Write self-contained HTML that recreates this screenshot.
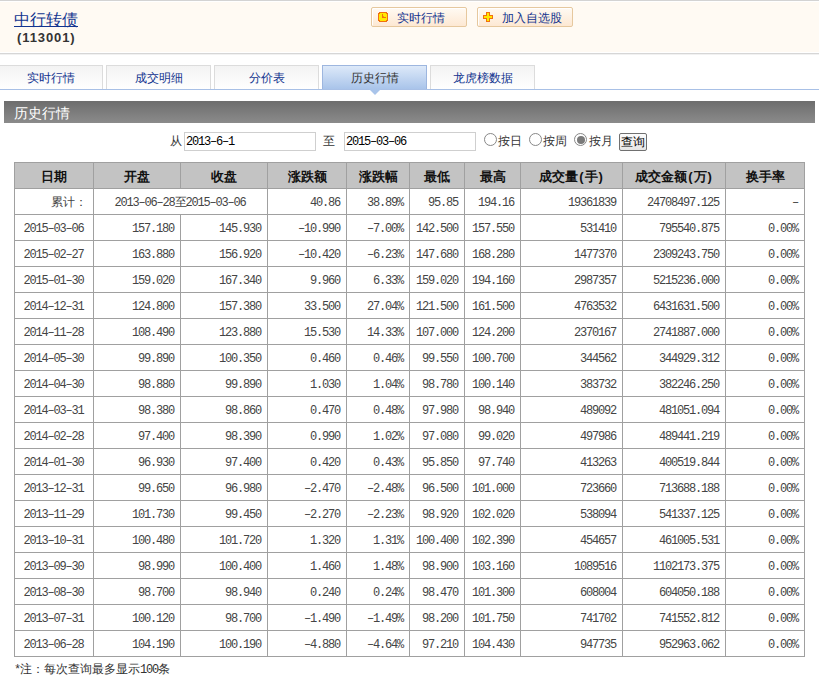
<!DOCTYPE html>
<html><head><meta charset="utf-8">
<style>
*{margin:0;padding:0;box-sizing:border-box}
html,body{width:819px;height:680px;overflow:hidden;background:#fff;font-family:"Liberation Sans",sans-serif;font-size:12px;color:#333}
.abs{position:absolute}
#hdr{position:absolute;left:0;top:0;width:819px;height:54px;background:#fffaf3;border-top:1px solid #d3d3d3;border-bottom:1px solid #d6d6d6;box-shadow:inset 0 1px 0 #fff, inset 0 -1px 0 #fff, 0 1px 0 #f1f1f1}
#title{position:absolute;left:14px;top:10px;font-size:16px;color:#12348f;text-decoration:underline;line-height:20px;white-space:nowrap}
#code{position:absolute;left:17px;top:30px;font-size:13px;font-weight:bold;color:#333;line-height:16px;letter-spacing:0.9px}
.btn{position:absolute;top:7px;height:20px;border:1px solid #e6c89e;border-radius:2px;background:linear-gradient(#fffaf3,#fde8d3);box-shadow:inset 1px 1px 0 #fff;color:#12348f;font-size:12px;line-height:18px;white-space:nowrap}
.btn svg{position:absolute;left:6px;top:4px}
.btn span{position:absolute;top:1px}
.tab{position:absolute;top:65px;height:24px;width:105px;border:1px solid #dcdcdc;border-bottom:none;background:linear-gradient(#f3f3f3,#fff);color:#12348f;text-align:center;line-height:23px;padding-top:1px;font-size:12px}
.tab.on{border-color:#9db6df;background:linear-gradient(#dde9f9,#a9c4ea);color:#333}
#tabline{position:absolute;left:0;top:89px;width:819px;height:1px;background:#a8c0e6}
#arrow{position:absolute;left:369px;top:89px;width:0;height:0;border-left:6px solid transparent;border-right:6px solid transparent;border-top:6px solid #a9c4ea}
#bar{position:absolute;left:4px;top:101px;width:811px;height:22px;background:linear-gradient(#6d6d6d,#8b8b8b);color:#fff;font-size:14px;line-height:24px;padding-left:10px}
.inp{position:absolute;top:132px;height:19px;border:1px solid #cfcfcf;font-family:"Liberation Mono",monospace;font-size:12px;letter-spacing:-1.2px;line-height:17px;padding-left:1px;padding-top:1px;color:#000;background:#fff}
.lbl{position:absolute;top:133px;line-height:16px;font-size:12px;color:#333}
.radio{position:absolute;top:133px;width:13px;height:13px;border:1px solid #888;border-radius:50%;background:#fff}
.radio.on::after{content:"";position:absolute;left:1.5px;top:1.5px;width:8px;height:8px;border-radius:50%;background:#7a7a7a}
#qbtn{position:absolute;left:619px;top:133px;width:28px;height:18px;border:1px solid #707070;border-radius:2px;background:linear-gradient(#fcfcfc,#e6e6e6);color:#000;font-size:12px;line-height:16px;text-align:center}
table{position:absolute;left:14px;top:162px;border-collapse:collapse;table-layout:fixed;width:790px}
td,th{border:1px solid #a0a0a0;height:26px;padding:2px 6px 0 0;font-family:"Liberation Mono",monospace;font-size:12px;letter-spacing:-1.2px;color:#444;text-align:right;white-space:nowrap;overflow:hidden}
th{background:#c3c3c3;font-family:"Liberation Sans",sans-serif;font-size:13px;font-weight:bold;text-align:center;letter-spacing:0;padding:2px 0 0 0;color:#111}
td.c{text-align:center;padding:2px 1px 0 0}
td.f{letter-spacing:0;font-family:"Liberation Sans",sans-serif;padding-right:6px}
th i{font-style:normal;padding:0 1px}
.m{font-weight:normal;font-family:"Liberation Mono",monospace;letter-spacing:-1.2px}
#note{position:absolute;left:14px;top:661px;font-size:12px;color:#333;line-height:16px}
</style></head><body>
<div id="hdr"></div>
<div id="title">中行转债</div>
<div id="code">(113001)</div>
<div class="btn" style="left:371px;width:96px">
<svg width="10" height="10" viewBox="0 0 10 10" shape-rendering="crispEdges"><rect x="1" y="0" width="8" height="10" fill="#f07010"/><rect x="0" y="1" width="10" height="8" fill="#f07010"/><rect x="2" y="1" width="6" height="8" fill="#ffe800"/><rect x="1" y="2" width="8" height="6" fill="#ffe800"/><rect x="4" y="2" width="1" height="4" fill="#f07010"/><rect x="4" y="5" width="4" height="1" fill="#f07010"/><rect x="5" y="4" width="1" height="1" fill="#f5a000"/></svg>
<span style="left:25px">实时行情</span></div>
<div class="btn" style="left:477px;width:96px">
<svg style="left:5px" width="10" height="10" viewBox="0 0 10 10" shape-rendering="crispEdges"><rect x="3" y="0" width="4" height="10" fill="#f07010"/><rect x="0" y="3" width="10" height="4" fill="#f07010"/><rect x="4" y="1" width="2" height="8" fill="#ffe800"/><rect x="1" y="4" width="8" height="2" fill="#ffe800"/></svg>
<span style="left:24px">加入自选股</span></div>

<div class="tab" style="left:-2px">实时行情</div>
<div class="tab" style="left:106px">成交明细</div>
<div class="tab" style="left:214px">分价表</div>
<div class="tab on" style="left:322px">历史行情</div>
<div class="tab" style="left:430px">龙虎榜数据</div>
<div id="tabline"></div>
<div id="arrow"></div>

<div id="bar">历史行情</div>

<div class="lbl" style="left:170px">从</div>
<div class="inp" style="left:184px;width:132px">2013–6–1</div>
<div class="lbl" style="left:323px">至</div>
<div class="inp" style="left:344px;width:132px">2015–03–06</div>
<div class="radio" style="left:484px"></div><div class="lbl" style="left:498px">按日</div>
<div class="radio" style="left:529px"></div><div class="lbl" style="left:543px">按周</div>
<div class="radio on" style="left:574px"></div><div class="lbl" style="left:589px">按月</div>
<div id="qbtn">查询</div>

<table>
<colgroup><col style="width:79px"><col style="width:87px"><col style="width:87px"><col style="width:79px"><col style="width:63px"><col style="width:55px"><col style="width:56px"><col style="width:102px"><col style="width:103px"><col style="width:79px"></colgroup>
<tr><th>日期</th><th>开盘</th><th>收盘</th><th>涨跌额</th><th>涨跌幅</th><th>最低</th><th>最高</th><th>成交量<i>(</i>手<i>)</i></th><th>成交金额<i>(</i>万<i>)</i></th><th>换手率</th></tr>
<tr><td class="f">累计：</td><td class="c" colspan="2">2013–06–28至2015–03–06</td><td>40.86</td><td>38.89%</td><td>95.85</td><td>194.16</td><td>19361839</td><td>24708497.125</td><td>–</td></tr>
<tr><td class="c">2015–03–06</td><td>157.180</td><td>145.930</td><td>–10.990</td><td>–7.00%</td><td>142.500</td><td>157.550</td><td>531410</td><td>795540.875</td><td>0.00%</td></tr>
<tr><td class="c">2015–02–27</td><td>163.880</td><td>156.920</td><td>–10.420</td><td>–6.23%</td><td>147.680</td><td>168.280</td><td>1477370</td><td>2309243.750</td><td>0.00%</td></tr>
<tr><td class="c">2015–01–30</td><td>159.020</td><td>167.340</td><td>9.960</td><td>6.33%</td><td>159.020</td><td>194.160</td><td>2987357</td><td>5215236.000</td><td>0.00%</td></tr>
<tr><td class="c">2014–12–31</td><td>124.800</td><td>157.380</td><td>33.500</td><td>27.04%</td><td>121.500</td><td>161.500</td><td>4763532</td><td>6431631.500</td><td>0.00%</td></tr>
<tr><td class="c">2014–11–28</td><td>108.490</td><td>123.880</td><td>15.530</td><td>14.33%</td><td>107.000</td><td>124.200</td><td>2370167</td><td>2741887.000</td><td>0.00%</td></tr>
<tr><td class="c">2014–05–30</td><td>99.890</td><td>100.350</td><td>0.460</td><td>0.46%</td><td>99.550</td><td>100.700</td><td>344562</td><td>344929.312</td><td>0.00%</td></tr>
<tr><td class="c">2014–04–30</td><td>98.880</td><td>99.890</td><td>1.030</td><td>1.04%</td><td>98.780</td><td>100.140</td><td>383732</td><td>382246.250</td><td>0.00%</td></tr>
<tr><td class="c">2014–03–31</td><td>98.380</td><td>98.860</td><td>0.470</td><td>0.48%</td><td>97.980</td><td>98.940</td><td>489092</td><td>481051.094</td><td>0.00%</td></tr>
<tr><td class="c">2014–02–28</td><td>97.400</td><td>98.390</td><td>0.990</td><td>1.02%</td><td>97.080</td><td>99.020</td><td>497986</td><td>489441.219</td><td>0.00%</td></tr>
<tr><td class="c">2014–01–30</td><td>96.930</td><td>97.400</td><td>0.420</td><td>0.43%</td><td>95.850</td><td>97.740</td><td>413263</td><td>400519.844</td><td>0.00%</td></tr>
<tr><td class="c">2013–12–31</td><td>99.650</td><td>96.980</td><td>–2.470</td><td>–2.48%</td><td>96.500</td><td>101.000</td><td>723660</td><td>713688.188</td><td>0.00%</td></tr>
<tr><td class="c">2013–11–29</td><td>101.730</td><td>99.450</td><td>–2.270</td><td>–2.23%</td><td>98.920</td><td>102.020</td><td>538094</td><td>541337.125</td><td>0.00%</td></tr>
<tr><td class="c">2013–10–31</td><td>100.480</td><td>101.720</td><td>1.320</td><td>1.31%</td><td>100.400</td><td>102.390</td><td>454657</td><td>461005.531</td><td>0.00%</td></tr>
<tr><td class="c">2013–09–30</td><td>98.990</td><td>100.400</td><td>1.460</td><td>1.48%</td><td>98.900</td><td>103.160</td><td>1089516</td><td>1102173.375</td><td>0.00%</td></tr>
<tr><td class="c">2013–08–30</td><td>98.700</td><td>98.940</td><td>0.240</td><td>0.24%</td><td>98.470</td><td>101.300</td><td>608004</td><td>604050.188</td><td>0.00%</td></tr>
<tr><td class="c">2013–07–31</td><td>100.120</td><td>98.700</td><td>–1.490</td><td>–1.49%</td><td>98.200</td><td>101.750</td><td>741702</td><td>741552.812</td><td>0.00%</td></tr>
<tr><td class="c">2013–06–28</td><td>104.190</td><td>100.190</td><td>–4.880</td><td>–4.64%</td><td>97.210</td><td>104.430</td><td>947735</td><td>952963.062</td><td>0.00%</td></tr>
</table>
<div id="note"><b class="m">*</b>注：每次查询最多显示<b class="m">100</b>条</div>
</body></html>
